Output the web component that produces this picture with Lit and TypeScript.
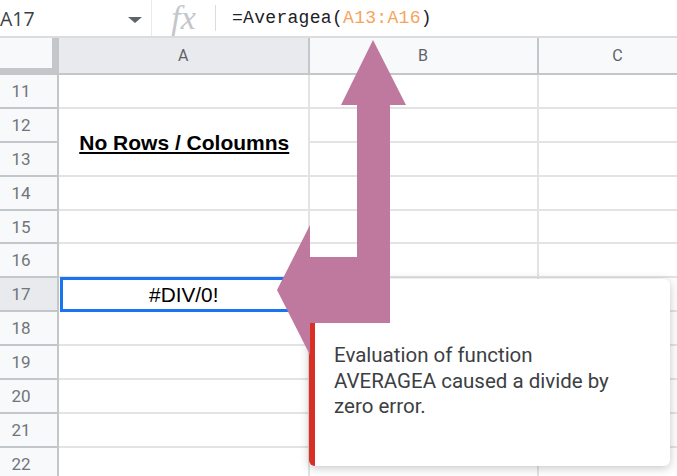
import { LitElement, html, css } from "lit";
import { customElement } from "lit/decorators.js";

const ROWS = [11, 12, 13, 14, 15, 16, 17, 18, 19, 20, 21, 22];

@customElement("app-root")
export class AppRoot extends LitElement {
  static styles = css`
    :host {
      display: block;
      position: relative;
      width: 677px;
      height: 476px;
      overflow: hidden;
      background: #fff;
      font-family: "Roboto", "Liberation Sans", sans-serif;
    }
    .bar {
      height: 36px;
      display: flex;
      align-items: center;
      background: #fff;
      color: #202124;
      border-bottom: 2px solid #dadce0;
    }
    .name {
      width: 128px;
      font-family: "Open Sans", "Roboto", sans-serif;
      font-size: 19.5px;
      color: #3c4043;
    }
    .caret {
      width: 0;
      height: 0;
      border-left: 7px solid transparent;
      border-right: 7px solid transparent;
      border-top: 6px solid #5f6368;
      margin-top: 3px;
    }
    .sep1 {
      width: 1px;
      height: 36px;
      background: #e8eaed;
      margin-left: 9px;
    }
    .fx {
      width: 63px;
      text-align: center;
      font-family: "Liberation Serif", serif;
      font-style: italic;
      font-size: 34px;
      color: #c4c6c9;
      line-height: 36px;
    }
    .sep2 {
      width: 1px;
      height: 26px;
      background: #dadce0;
    }
    .formula {
      margin-left: 16px;
      font-family: "Liberation Mono", monospace;
      font-size: 18px;
      letter-spacing: 0.3px;
      color: #202124;
      white-space: pre;
    }
    .formula span {
      color: #f7a35c;
    }
    .grid {
      display: grid;
      grid-template-columns: 59px 250.5px 229px 160px;
      grid-auto-rows: 33.9px;
    }
    .head {
      height: 37px;
      display: grid;
      grid-template-columns: 59px 250.5px 229px 160px;
      font-size: 16px;
      color: #5f6368;
    }
    .head > div {
      display: flex;
      align-items: center;
      justify-content: center;
      box-sizing: border-box;
      background: #f8f9fa;
      border-right: 2px solid #c4c7c9;
      border-bottom: 2px solid #c4c7c9;
    }
    .head .active {
      background: #e8eaed;
    }
    .head .corner {
      border-right: 7px solid #c4c7c9;
      border-bottom: 7px solid #c4c7c9;
    }
    .num {
      box-sizing: border-box;
      display: flex;
      align-items: center;
      justify-content: center;
      padding-right: 15px;
      background: #f8f9fa;
      color: #70757a;
      font-size: 17px;
      border-right: 2px solid #c4c7c9;
      border-bottom: 2px solid #c4c7c9;
    }
    .num.active {
      background: #e8eaed;
    }
    .cell {
      box-sizing: border-box;
      border-right: 2px solid #e2e3e3;
      border-bottom: 2px solid #e2e3e3;
    }
    .title {
      grid-row: span 2;
      display: flex;
      align-items: center;
      justify-content: center;
      padding: 2px 0 0 2px;
      font-family: "Liberation Sans", sans-serif;
      font-size: 21px;
      font-weight: 700;
      text-decoration: underline;
      color: #000;
      white-space: nowrap;
    }
    .selected {
      display: flex;
      align-items: center;
      justify-content: center;
      padding-right: 2px;
      font-family: "Liberation Sans", sans-serif;
      font-size: 20.8px;
      color: #000;
      border: 3px solid #1a73f0;
      margin-top: -1px;
      margin-left: 1px;
    }
    .popup {
      position: absolute;
      left: 309px;
      top: 279px;
      width: 361px;
      height: 187px;
      box-sizing: border-box;
      background: #fff;
      border-radius: 6px;
      box-shadow: 0 2px 10px rgba(60, 64, 67, 0.3);
      border-left: 6px solid #d93025;
      padding: 64px 52px 0 19px;
      font-size: 20.5px;
      line-height: 25.5px;
      color: #3c4043;
    }
    .arrow {
      position: absolute;
      left: 0;
      top: 0;
      width: 677px;
      height: 476px;
    }
  `;

  private dataCell(r: number) {
    if (r === 12) return html`<div class="cell title">No Rows / Coloumns</div>`;
    if (r === 13) return null;
    if (r === 17) return html`<div class="cell selected">#DIV/0!</div>`;
    return html`<div class="cell"></div>`;
  }

  render() {
    return html`
      <div class="bar">
        <div class="name">A17</div>
        <div class="caret"></div>
        <div class="sep1"></div>
        <div class="fx">fx</div>
        <div class="sep2"></div>
        <div class="formula">=Averagea(<span>A13:A16</span>)</div>
      </div>
      <div class="head">
        <div class="corner"></div>
        <div class="active">A</div>
        <div>B</div>
        <div>C</div>
      </div>
      <div class="grid">
        ${ROWS.map(
          (r) => html`
            <div class="num ${r === 17 ? "active" : ""}">${r}</div>
            ${this.dataCell(r)}
            <div class="cell"></div>
            <div class="cell"></div>
          `
        )}
      </div>
      <div class="popup">
        Evaluation of function AVERAGEA caused a divide by zero error.
      </div>
      <svg class="arrow" viewBox="0 0 677 476">
        <polygon
          fill="#bf789e"
          points="373,40 406,105 390,105 390,323 310,323 310,355 277,290 310,225 310,257 357,257 357,105 341,105"
        />
      </svg>
    `;
  }
}
